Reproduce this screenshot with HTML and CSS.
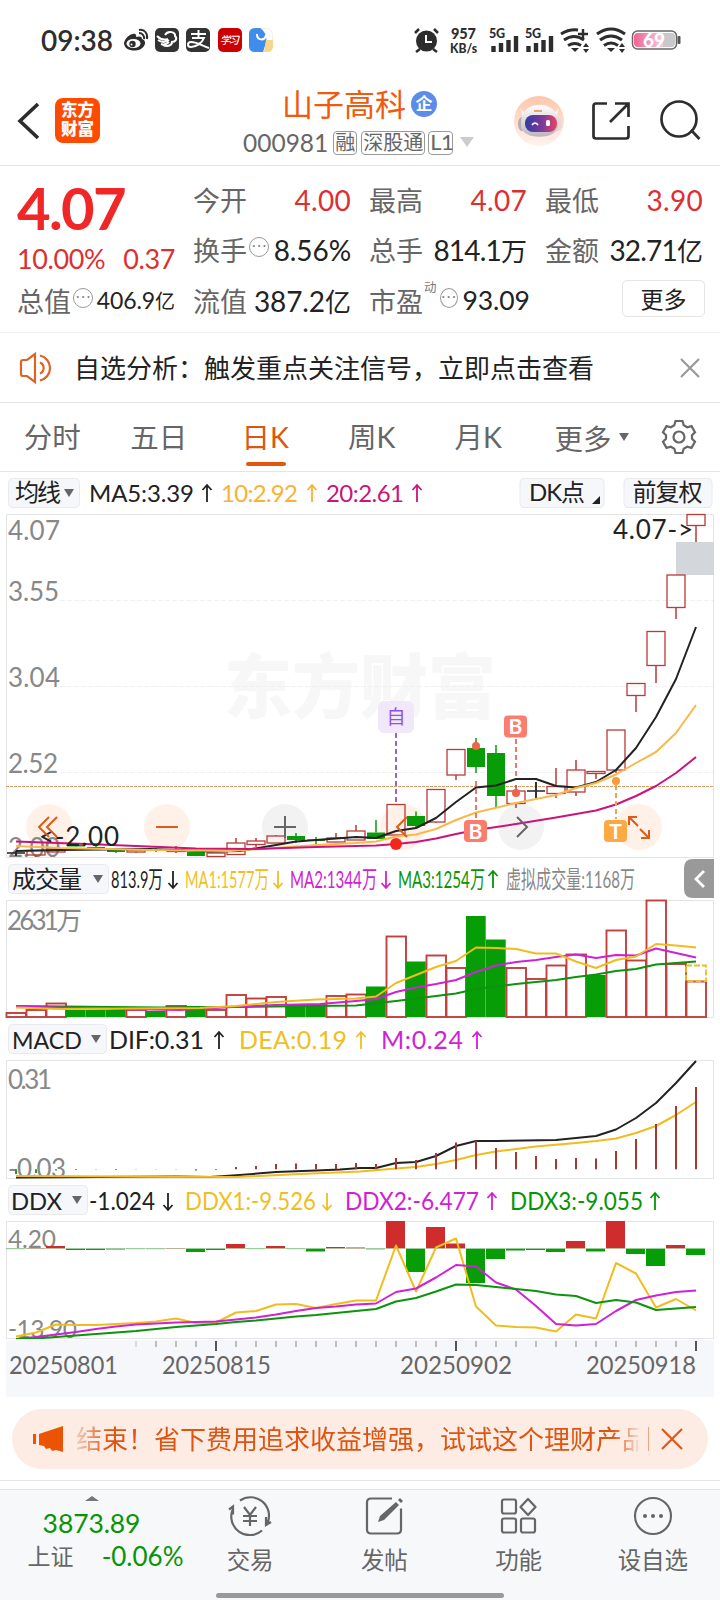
FILE: index.html
```html
<!DOCTYPE html>
<html lang="zh-CN">
<head>
<meta charset="utf-8">
<title>山子高科 000981</title>
<link rel="stylesheet" href="styles.css">
</head>
<body>
<header class="status">
  <span class="clock">09:38</span>
  <svg class="status-left" width="152" height="28" viewBox="122 26 152 28">
    <g fill="none" stroke="#2d2d2d" stroke-width="2"><path d="M139 33a5 5 0 0 1 5 6M139 30c6-1 9 4 8 9"/></g>
    <path fill="#2d2d2d" d="M124 43c1-5 7-10 11-9 2 1 1 3 1 3 3-1 6-1 6 2 3 1 4 4 2 7-4 7-20 6-20-3z"/>
    <ellipse cx="133.500" cy="43.500" rx="7" ry="4.600" fill="#fff"/><circle cx="132.500" cy="44" r="3.200" fill="#2d2d2d"/><circle cx="131.500" cy="44.500" r="1" fill="#fff"/>
    <rect x="155" y="28" width="24" height="24" rx="5" fill="#333"/>
    <path d="M157 36c4 4 8 4 11 3M158 40c4 3 8 2 11 0M161 44c3 1 6 0 8-2M165 35c3-5 11-3 10 1 3 3 0 6-3 6 0 4-6 5-9 3" fill="none" stroke="#fff" stroke-width="2"/>
    <rect x="186" y="28" width="24" height="24" rx="5" fill="#333"/>
    <path d="M191 34h15M198.500 30v8M192 38h12c-2 5-8 9-13 9-4 0-4-5 0-5 6 0 12 4 18 6" fill="none" stroke="#fff" stroke-width="2"/>
    <rect x="218" y="28" width="24" height="24" rx="5" fill="#c00"/>
    <text x="220" y="44" class="study" textLength="19">学习</text>
    <rect x="249.500" y="28.500" width="23" height="23" rx="6" fill="#fff" stroke="#eee"/>
    <path d="M249 34q0-6 6-6h5c6 4 8 11 5 18l-2 6h-8q-6 0-6-6z" fill="#408ceb"/><path d="M266 40h7v6q0 6-6 6h-3z" fill="#f7d58b"/><path d="M257 34c0 7 8 7 9 1" fill="none" stroke="#fff" stroke-width="2"/>
  </svg>
  <svg class="status-right" width="270" height="32" viewBox="412 24 270 32">
    <circle cx="426.500" cy="41" r="10.500" fill="#2d2d2d"/><path d="M426 35v7h6" fill="none" stroke="#fff" stroke-width="2"/><path d="M415 33l4-4M438 33l-4-4M420 49l-4 3M433 49l4 3" stroke="#2d2d2d" stroke-width="2.500"/>
    <g class="net"><text x="451" y="39" font-size="14.500" textLength="25">957</text><text x="450" y="53" font-size="12.500" textLength="27" lengthAdjust="spacingAndGlyphs">KB/s</text>
    <text x="489" y="38" font-size="12.500" textLength="16">5G</text><text x="525" y="38" font-size="12.500" textLength="16">5G</text></g>
    <path d="M493.500 46v6M501 43v9M508.500 40v12M516 36v16M528.500 46v6M536 43v9M543.500 40v12M551 36v16" stroke="#2d2d2d" stroke-width="4.400"/>
    <g fill="none" stroke="#2d2d2d" stroke-width="3"><path d="M561 34q8-5 17-4M564 40q10-7 20 0M568 45.500q7-4 13 0M597 34q14-10 28 0M600 40q11-8 22 0M604 45.500q7-5 14 0"/><path d="M578 34h10M583 29v10" stroke-width="2.400"/></g>
    <path d="M571 48h8l-4 4zM607 48h8l-4 4zM583 47l3-4 3 4zM583 49l3 4 3-4zM619 47l3-4 3 4zM619 49l3 4 3-4z" fill="#2d2d2d"/>
    <defs><linearGradient id="bat"><stop offset="0" stop-color="#ef6292"/><stop offset="1" stop-color="#fac8da"/></linearGradient></defs>
    <rect x="632.500" y="31" width="44" height="18" rx="5" fill="#fff" stroke="#666" stroke-width="1.500"/><path d="M638 33h25v14h-25q-4 0-4-4v-6q0-4 4-4z" fill="url(#bat)"/><path d="M663 33h9q3 0 3 4v6q0 4-3 4h-9z" fill="#c9c9c9"/><rect x="677.500" y="36" width="3" height="8" rx="1" fill="#555"/>
    <text x="643" y="47" class="pct" textLength="22">69</text>
  </svg>
</header>

<div class="titlebar">
  <svg class="back" width="24" height="40" viewBox="0 0 24 40"><path d="M22 3L4 20l18 17" fill="none" stroke="#2d2d2d" stroke-width="3.600"/></svg>
  <div class="logo"><span>东方</span><span>财富</span></div>
  <div class="name">
    <div class="name-row">山子高科<span class="corp">企</span></div>
    <div class="code-row"><span class="code">000981</span><span class="tag">融</span><span class="tag">深股通</span><span class="tag lv">L1</span><i class="drop"></i></div>
  </div>
  <svg class="tools" width="190" height="54" viewBox="512 94 190 54">
    <defs><linearGradient id="halo" x2="0" y2="1"><stop stop-color="#fdc6aa"/><stop offset="1" stop-color="#fff3ed"/></linearGradient><linearGradient id="visor"><stop stop-color="#343a9e"/><stop offset=".55" stop-color="#803a9b"/><stop offset="1" stop-color="#e9445f"/></linearGradient><linearGradient id="shell" x2="0" y2="1"><stop stop-color="#fff"/><stop offset="1" stop-color="#bfb4bd"/></linearGradient></defs>
    <circle cx="539" cy="121" r="25" fill="url(#halo)"/>
    <path d="M520 107q2 5 6 6l-3 6zM559 107q-2 5-6 6l3 6z" fill="#f9f4f2"/><ellipse cx="522" cy="124" rx="4" ry="7" fill="#b5adb5"/><ellipse cx="558" cy="124" rx="4" ry="7" fill="#e5d9da"/>
    <path d="M521 122c0-23 37-23 37 0v5c-2 13-35 13-37 0z" fill="url(#shell)"/><rect x="525" y="115" width="32" height="17" rx="8" fill="url(#visor)"/><path d="M532 125q3-4 6 0" fill="none" stroke="#fff" stroke-width="1.700"/><rect x="546" y="120" width="4" height="6" rx="1.500" fill="#fff"/><path d="M534 111h8" stroke="#eba26d" stroke-width="2"/>
    <path d="M607 103.500h-11q-2.500 0-2.500 2.500v30q0 2.500 2.500 2.500h30q2.500 0 2.500-2.500v-10M610 122l18-18M615 103.500h13.500V117" fill="none" stroke="#2d2d2d" stroke-width="2.700"/>
    <circle cx="679" cy="119" r="17.500" fill="none" stroke="#2d2d2d" stroke-width="2.700"/><path d="M691 130l8.500 9" stroke="#2d2d2d" stroke-width="2.700"/>
  </svg>
</div>

<section class="quote">
  <div class="col first">
    <strong class="price">4.07</strong>
    <div class="cell change"><span>10.00%</span><span>0.37</span></div>
    <div class="cell"><label>总值</label><i class="dots">⋯</i><b class="sm">406.9<em>亿</em></b></div>
  </div>
  <div class="col">
    <div class="cell"><label>今开</label><b class="up">4.00</b></div>
    <div class="cell"><label>换手</label><i class="dots">⋯</i><b>8.56%</b></div>
    <div class="cell"><label>流值</label><b>387.2<em>亿</em></b></div>
  </div>
  <div class="col">
    <div class="cell"><label>最高</label><b class="up">4.07</b></div>
    <div class="cell"><label>总手</label><b class="tight">814.1<em>万</em></b></div>
    <div class="cell"><label>市盈</label><sup>动</sup><i class="dots">⋯</i><b class="pe">93.09</b></div>
  </div>
  <div class="col">
    <div class="cell"><label>最低</label><b class="up">3.90</b></div>
    <div class="cell"><label>金额</label><b class="tight">32.71<em>亿</em></b></div>
    <div class="cell end"><button class="more">更多</button></div>
  </div>
</section>

<section class="notice">
  <svg width="36" height="32" viewBox="19 351 36 32"><path d="M21 361q0-2 2-2h4l8-6v28l-8-6h-4q-2 0-2-2zM40 354.500a12.800 12.800 0 0 1 0 25M40 361.500a6 6 0 0 1 0 11" fill="none" stroke="#dd6424" stroke-width="2.200"/></svg>
  <span class="notice-text">自选分析：触发重点关注信号，立即点击查看</span>
  <svg class="close" width="20" height="20" viewBox="0 0 20 20"><path d="M1 1l18 18M19 1L1 19" stroke="#999" stroke-width="2.200"/></svg>
</section>

<nav class="tabs">
  <span class="tab">分时</span><span class="tab">五日</span><span class="tab on">日K</span><span class="tab">周K</span><span class="tab">月K</span>
  <span class="tab-more">更多<i></i></span>
  <svg width="36" height="36" viewBox="-18 -18 36 36"><path d="M-3.500-16h7l1.200 4.200 3.500 2 4.300-1.100 3.500 6.100-3 3v3.600l3 3-3.500 6.100-4.300-1.100-3.500 2L3.500 16h-7l-1.200-4.200-3.500-2-4.300 1.100-3.500-6.100 3-3v-3.600l-3-3 3.500-6.100 4.300 1.100 3.500-2z" fill="none" stroke="#666" stroke-width="2.200"/><circle r="5.500" fill="none" stroke="#666" stroke-width="2.200"/></svg>
</nav>

<main class="charts">
  <svg id="charts" width="720" height="926" viewBox="0 472 720 926">
    <defs>
      <path id="up" d="M0 0v-17M-4.500-12L0-17l4.500 5" fill="none" stroke-width="1.800"/>
      <path id="down" d="M0 0v-17M-4.500-5L0 0l4.500-5" fill="none" stroke-width="1.800"/>
      <clipPath id="clip"><rect x="6" y="1221" width="708" height="118"/></clipPath>
    </defs>
    <text class="mark" x="224" y="713" textLength="272" lengthAdjust="spacingAndGlyphs">东方财富</text>
    <g class="frame">
      <path d="M6.500 857.500V514.500H713.500V857.500z"/><path d="M6.500 1017.500V900.500H713.500V1017.500z"/><path d="M6.500 1178.500V1060.500H713.500V1178.500z"/><path d="M6.500 1338.500V1221.500H713.500V1338.500z"/>
    </g>
    <path d="M60 600.500H713M60 686.500H713M60 772.500H713" class="grid"/>
    <path d="M6 786.500H713" class="ref"/>
    <rect x="6" y="1340" width="708" height="57" fill="#f6f7fa"/>
    <g class="chip">
      <rect x="8.500" y="478.500" width="71" height="29" rx="4"/><rect x="520" y="478.500" width="84" height="29" rx="4"/><rect x="624" y="478.500" width="88" height="29" rx="4"/>
      <rect x="8.500" y="864.500" width="100" height="29" rx="4"/><rect x="8.500" y="1024.500" width="98" height="29" rx="4"/><rect x="8.500" y="1185.500" width="79" height="29" rx="4"/>
    </g>
    <g fill="#666"><path d="M64 489h10l-5 8zM93 875h10l-5 8zM91 1035h10l-5 8zM72 1196h10l-5 8z"/><path d="M600 496v8h-8z" fill="#222"/></g>
    <g class="t c-k">
      <text x="15" y="501" textLength="46">均线</text><text x="529" y="501" textLength="56">DK点</text><text x="632.500" y="501" textLength="70">前复权</text>
      <text x="89" y="501.500" textLength="105">MA5:3.39</text>
      <text x="12" y="887.500" textLength="70">成交量</text><text x="12" y="1049" textLength="70" lengthAdjust="spacingAndGlyphs">MACD</text><text x="11" y="1210" textLength="51" lengthAdjust="spacingAndGlyphs">DDX</text>
      <text x="111" y="888" textLength="52" lengthAdjust="spacingAndGlyphs">813.9万</text>
      <text class="b" x="109" y="1049" textLength="95">DIF:0.31</text><text class="b" x="89" y="1210" textLength="66" lengthAdjust="spacingAndGlyphs">-1.024</text>
    </g>
    <g class="t c-o"><text x="221" y="501.500" textLength="77">10:2.92</text></g>
    <g class="t c-p"><text x="326" y="501.500" textLength="78">20:2.61</text></g>
    <g class="t c-y"><text x="185" y="888" textLength="84" lengthAdjust="spacingAndGlyphs">MA1:1577万</text><text class="b" x="239" y="1049" textLength="108">DEA:0.19</text><text class="b" x="185" y="1210" textLength="131" lengthAdjust="spacingAndGlyphs">DDX1:-9.526</text></g>
    <g class="t c-m"><text x="290" y="888" textLength="87" lengthAdjust="spacingAndGlyphs">MA2:1344万</text><text class="b" x="381" y="1049" textLength="82">M:0.24</text><text class="b" x="345" y="1210" textLength="134" lengthAdjust="spacingAndGlyphs">DDX2:-6.477</text></g>
    <g class="t c-g"><text x="398" y="888" textLength="87" lengthAdjust="spacingAndGlyphs">MA3:1254万</text><text class="b" x="510" y="1210" textLength="133" lengthAdjust="spacingAndGlyphs">DDX3:-9.055</text></g>
    <g class="t c-l"><text x="506" y="888" textLength="129" lengthAdjust="spacingAndGlyphs">虚拟成交量:1168万</text></g>
    <g stroke="#222"><use href="#up" x="207" y="502"/><use href="#down" x="173" y="888"/><use href="#up" x="219" y="1049"/><use href="#down" x="168" y="1210"/></g>
    <g stroke="#f9b233"><use href="#up" x="312" y="502"/></g><g stroke="#c9157b"><use href="#up" x="417" y="502"/></g>
    <g stroke="#efbf1f"><use href="#down" x="278" y="888"/><use href="#up" x="361" y="1049"/><use href="#down" x="327" y="1210"/></g>
    <g stroke="#cf22d4"><use href="#down" x="386" y="888"/><use href="#up" x="477" y="1049"/><use href="#up" x="492" y="1210"/></g>
    <g stroke="#079407"><use href="#up" x="493" y="888"/><use href="#up" x="655" y="1210"/></g>
    <path d="M714 859h-21q-9 0-9 9v21q0 9 9 9h21z" fill="#999"/><path d="M704 871l-8 8 8 8" fill="none" stroke="#fff" stroke-width="2.800"/>
    <rect x="676" y="542" width="38" height="33" fill="#d3d6db"/>
    <g id="pads"><g fill="#fff0e8"><circle cx="49" cy="827" r="23"/><circle cx="167" cy="827" r="23"/><circle cx="403" cy="827" r="23"/><circle cx="639" cy="827" r="23"/></g><g fill="#f2f2f2"><circle cx="285" cy="827" r="23"/><circle cx="521" cy="827" r="23"/></g></g>
    <g class="axis">
      <text x="8" y="540" textLength="52">4.07</text><text x="8" y="601" textLength="51">3.55</text><text x="8" y="687" textLength="52">3.04</text><text x="8" y="773" textLength="50">2.52</text><text x="8" y="857" textLength="52">2.00</text>
      <text x="7" y="930" textLength="75">2631万</text><text x="8" y="1088.500" textLength="44">0.31</text><text x="8" y="1178" textLength="58">-0.03</text>
      <text class="ddx" x="8" y="1248" textLength="48">4.20</text><text class="ddx" x="8" y="1338" textLength="69">-13.90</text>
    </g>
    <g id="plot"></g>
    <g class="axis dates"><text x="9" y="1374" textLength="109" lengthAdjust="spacingAndGlyphs">20250801</text><text x="162" y="1374" textLength="109" lengthAdjust="spacingAndGlyphs">20250815</text><text x="400" y="1374" textLength="112" lengthAdjust="spacingAndGlyphs">20250902</text><text x="586" y="1374" textLength="110" lengthAdjust="spacingAndGlyphs">20250918</text></g>
    <g class="callout"><text x="613" y="539" textLength="80">4.07-&gt;</text><text x="39" y="846" textLength="80">&lt;-2.00</text></g>
    <g fill="none" stroke="#df5b17" stroke-width="2"><path d="M49 817L39 827l10 10M57 817L47 827l10 10M156 827h22M407 817l-10 10 10 10M629 825v-8h8M629 817l9 9M649 830v8h-8M649 838l-9-9"/><path stroke="#666" d="M274 827h22M285 816v22M517 817l10 10-10 10"/></g>
    <g fill="none" stroke-width="2" stroke-dasharray="5 3"><path d="M396 733V804" stroke="#9a62d8"/><path d="M516 739V777M476 781V819" stroke="#f0766a"/><path d="M616 785V819" stroke="#f4a14a"/></g>
    <circle cx="396" cy="844" r="6" fill="#f3261f"/><g fill="#f0624a"><circle cx="476" cy="746" r="4"/><circle cx="516" cy="793" r="4"/></g><circle cx="616" cy="781" r="4" fill="#f89b3b"/>
    <rect x="378" y="701" width="36" height="32" rx="6" fill="#efe4fc" opacity=".85"/><text x="386.500" y="724" class="zi">自</text>
    <g fill="#fb7d6e"><rect x="504" y="715.500" width="23" height="22" rx="4"/><rect x="464" y="820" width="23" height="22" rx="4"/><rect x="604" y="820" width="23" height="22" rx="4" fill="#fca944"/></g>
    <g class="bt"><text x="515.500" y="734">B</text><text x="475.500" y="838.500">B</text><text x="615.500" y="838.500">T</text></g>
  </svg>
</main>

<aside class="promo">
  <svg width="34" height="28" viewBox="30 1425 34 28"><path d="M32 1434h3v10h-3zM38 1434l24-8v26l-7-2-4 1-2-3-4 1-2-3-5-1z" fill="#ea5404"/></svg>
  <span class="promo-text">结束！省下费用追求收益增强，试试这个理财产品</span>
  <i class="bar"></i>
  <svg width="22" height="22" viewBox="0 0 22 22"><path d="M1 1l20 20M21 1L1 21" stroke="#e2571a" stroke-width="2.200"/></svg>
</aside>

<footer class="dock">
  <div class="index"><i class="tri"></i><span class="pts">3873.89</span><span class="idx-row"><span>上证</span><span class="down">-0.06%</span></span></div>
  <div class="item"><svg width="44" height="40" viewBox="-22 -20 44 40"><g fill="none" stroke="#666" stroke-width="2.200"><path d="M-10-15.500A18.500 18.500 0 0 1 17.500 7M12 14.500A18.500 18.500 0 0 1-17.500-6M-21-6.500l4-3v8M21 6l-5 3V1M-6-9L0-1l6-8M0-1V10M-7 0H7M-7 5H7"/></g></svg><span>交易</span></div>
  <div class="item"><svg width="44" height="40" viewBox="-22 -20 44 40"><path d="M8-17.500h-21q-4 0-4 4v27q0 4 4 4h26q4 0 4-4v-21" fill="none" stroke="#666" stroke-width="2.200"/><path d="M-6 6l2-6L12-14l3 3L0 4zM14-16l2-2 3 3-2 2z" fill="#666"/></svg><span>发帖</span></div>
  <div class="item"><svg width="44" height="40" viewBox="-22 -20 44 40"><g fill="none" stroke="#666" stroke-width="2.200"><rect x="-17" y="-16.500" width="14" height="14" rx="2"/><rect x="-17" y="2.500" width="14" height="14" rx="2"/><rect x="2" y="2.500" width="14" height="14" rx="2"/><path d="M9-17l7.500 8L9-1 1.500-9z" stroke-linejoin="round"/></g></svg><span>功能</span></div>
  <div class="item"><svg width="44" height="40" viewBox="-22 -20 44 40"><circle r="18" fill="none" stroke="#666" stroke-width="2.200"/><g fill="#666"><circle cx="-8" r="2"/><circle r="2"/><circle cx="8" r="2"/></g></svg><span>设自选</span></div>
  <i class="home"></i>
</footer>
<script src="chart.js"></script>
</body>
</html>
```
FILE: styles.css
```css
* { box-sizing: border-box; }
body { margin: 0; width: 720px; height: 1600px; overflow: hidden; background: #fff; color: #222; font-family: Lato, "Noto Sans CJK SC", sans-serif; display: flex; flex-direction: column; }
i, em { font-style: normal; }
svg { display: block; flex: none; }
.status { height: 80px; padding: 0 38px 0 41px; display: flex; align-items: center; }
.clock { font-size: 28px; font-weight: 600; color: #2d2d2d; width: 81px; letter-spacing: 0; white-space: nowrap; }
.status-right { margin-left: auto; }
.net { font-weight: 900; fill: #2d2d2d; }
.study { font-size: 10.500px; font-weight: 500; font-style: italic; fill: #fff; }
.pct { font-size: 19px; font-weight: 900; fill: #fff; }
.titlebar { height: 86px; border-bottom: 1px solid #e4e4e4; display: flex; align-items: flex-start; padding: 7px 18px 0 16px; }
.back { margin-top: 14px; }
.logo { margin: 11px 0 0 15px; width: 45px; height: 45px; border-radius: 8px; background: #ff4b00; color: #fff; font-size: 16.500px; font-weight: 900; line-height: 19px; padding-top: 3px; display: flex; flex-direction: column; align-items: center; }
.name { margin: 0 0 0 143px; width: 240px; flex: none; display: flex; flex-direction: column; align-items: flex-start; }
.name-row { height: 36px; line-height: 36px; font-size: 31px; color: #f05a0d; display: flex; align-items: center; gap: 5px; margin: -1px 0 0 39px; white-space: nowrap; }
.corp { width: 26px; height: 26px; border-radius: 50%; background: #5c8bea; color: #fff; font-size: 17px; font-weight: 700; line-height: 25px; text-align: center; }
.code-row { height: 42px; display: flex; align-items: center; gap: 4px; color: #666; font-size: 24.500px; white-space: nowrap; }
.code { margin-right: 1px; line-height: 40px; }
.tag { height: 24px; border: 1px solid #999; border-radius: 4px; font-size: 20px; line-height: 20px; padding: 0 1px; }
.lv { font-size: 22px; width: 25px; letter-spacing: -.5px; margin-left: -1px; }
.drop { border: 7px solid transparent; border-top: 10px solid #ccc; border-bottom: 0; margin: -2px 0 0 3px; }
.tools { margin: 7px 0 0 auto; }
.quote { height: 167px; padding: 8px 17px 0; display: grid; grid-template-columns: repeat(4, 158px); gap: 18px; border-bottom: 1px solid #efefef; }
.col { display: flex; flex-direction: column; }
.cell { height: 50.500px; display: flex; align-items: center; font-size: 27px; white-space: nowrap; }
.cell label { color: #666; }
.cell b { margin-left: auto; font-weight: 400; font-size: 28px; letter-spacing: -.1px; }
.cell b.tight { letter-spacing: -.8px; }
.cell em { font-size: 26px; letter-spacing: 0; }
.cell b.sm { font-size: 23px; }
.cell b.sm em { font-size: 20px; }
.cell b.pe { font-size: 26.500px; margin-left: 5px; margin-right: auto; }
.cell b.up { color: #dc3030; letter-spacing: .3px; position: relative; top: 1px; }
.cell sup { font-size: 12.500px; color: #777; align-self: flex-start; line-height: 20px; margin: 3px 1px 0 1px; }
.dots { width: 20px; height: 20px; border: 1.500px solid #999; border-radius: 50%; margin: -5px 0 0 2px; font-size: 16px; line-height: 16px; color: #888; text-align: center; font-family: "DejaVu Sans", sans-serif; }
.price { font-size: 58px; line-height: 68px; height: 59px; font-weight: 700; color: #f02727; letter-spacing: -1.700px; }
.change { height: 42px; padding-top: 8px; justify-content: space-between; color: #dc3030; letter-spacing: -.4px; }
.end { justify-content: flex-end; }
.more { width: 83px; height: 37px; border: 1px solid #e4e4e4; border-radius: 5px; background: #fff; padding: 0; font: 23px/33px "Noto Sans CJK SC", sans-serif; color: #222; margin: -4px -2px 0 0; }
.notice { height: 70px; border-bottom: 1px solid #e4e4e4; display: flex; align-items: center; padding: 0 20px 0 19px; }
.notice-text { font-size: 26px; margin: -3px 0 0 19px; white-space: nowrap; }
.close { margin-left: auto; }
.tabs { height: 69px; border-bottom: 1px solid #e4e4e4; display: flex; align-items: center; color: #666; font-size: 28.500px; }
.tab { width: 106.500px; height: 68px; line-height: 69px; text-align: center; position: relative; left: -1px; }
.tab.on { color: #dc560d; }
.tab.on::after { content: ""; position: absolute; left: 34px; bottom: 5px; width: 40px; height: 4px; border-radius: 2px; background: #e1570c; }
.tab-more { width: 106px; margin-left: 22px; display: flex; align-items: center; gap: 7px; white-space: nowrap; }
.tab-more i { border: 5px solid transparent; border-top: 8px solid #666; border-bottom: 0; }
.charts { height: 926px; }
.mark { font-size: 70px; font-weight: 900; fill: #f7f7f8; }
.frame { fill: none; stroke: #e4e4e4; }
.grid { stroke: #f0f0f0; stroke-dasharray: 5 2; }
.ref { stroke: #d9a06c; stroke-dasharray: 3 1; }
.chip { fill: #f6f7fa; stroke: #e9eaee; }
.t { font-size: 24px; }
.t .b { font-size: 25px; }
.c-k { fill: #222; } .c-o { fill: #f9b233; } .c-p { fill: #c9157b; } .c-y { fill: #efbf1f; } .c-m { fill: #cf22d4; } .c-g { fill: #079407; } .c-l { fill: #888; }
.axis { font-size: 26px; fill: #888; }
.axis .ddx { font-size: 24.500px; }
.dates { font-size: 25px; fill: #666; }
.callout { font-size: 26px; fill: #222; }
.zi { font-size: 19px; fill: #9650e0; }
.bt { font-size: 21px; font-weight: 700; fill: #fff; text-anchor: middle; }
.promo { margin: 11px 12px 0; height: 60px; flex: none; border-radius: 30px; background: #fdece3; display: flex; align-items: center; padding: 0 25px 0 19px; }
.promo-text { width: 564px; margin: -3px 0 0 11px; overflow: hidden; white-space: nowrap; font-size: 26px; color: #dc5512; -webkit-mask-image: linear-gradient(90deg, rgba(0,0,0,.2), #000 32px, #000 536px, rgba(0,0,0,.15)); mask-image: linear-gradient(90deg, rgba(0,0,0,.2), #000 32px, #000 536px, rgba(0,0,0,.15)); }
.bar { width: 1px; height: 24px; background: #e9a684; margin: 0 12px 0 10px; }
.dock { margin-top: 11px; height: 120px; flex: none; border-top: 1px solid #e4e4e4; padding-top: 9px; display: flex; position: relative; color: #666; background: linear-gradient(#fff 8px, #e4e4e4 8px, #e4e4e4 9px, #f7f8fa 9px); }
.index { width: 183px; display: flex; flex-direction: column; align-items: center; }
.tri { border: 7px solid transparent; border-bottom: 5px solid #777; border-top: 0; margin-top: 6px; }
.pts { font-size: 26.500px; line-height: 32px; margin-top: 6px; color: #079407; letter-spacing: -.1px; }
.idx-row { width: 156px; margin-left: 28px; display: flex; justify-content: space-between; align-items: center; font-size: 23px; line-height: 34px; }
.down { font-size: 26px; color: #079407; letter-spacing: 0; }
.item { width: 134.500px; display: flex; flex-direction: column; align-items: center; font-size: 23.500px; line-height: 34px; padding-top: 6px; }
.item span { margin-top: 7px; }
.home { position: absolute; left: 216px; bottom: 2px; width: 288px; height: 5px; border-radius: 3px; background: #999; }
```
FILE: chart.js
```js
const plot = document.getElementById("plot");
const RED = "#b93a38", GREEN = "#069d06";
const cx = (i) => 16 + 20 * i;

function add(tag, attrs, parent = plot) {
  const el = document.createElementNS("http://www.w3.org/2000/svg", tag);
  for (const key in attrs) el.setAttribute(key, attrs[key]);
  parent.appendChild(el);
  return el;
}
function line(points, color, parent) {
  add("polyline", { points: points.map((p) => p.join(",")).join(" "), fill: "none", stroke: color, "stroke-width": 2, "stroke-linejoin": "round" }, parent);
}

// [kind, bodyTop, bodyBottom, wickTop, wickBottom]
const candles = [
  ["k",853,853,851,856],["r",850.5,855,850,857],["r",849,852,849,852],["g",845,846.5,844,847],["g",847,848.5,846,849],
  ["g",850,852,849,853],["r",850,852,849,853],["g",849,851,848,852],["r",850,851.5,846,853],["g",852,856,851,856],
  ["r",853,856.5,853,856.5],["r",843,854.5,838,855],["r",841,844.5,838,847],["r",836,843,835,843],["g",836,840,833,843],
  ["g",839.5,841,837,845],["r",838,842,833,842],["r",831,840,825,840],["g",832.5,839,820,839],["r",804.5,835,804,835],
  ["g",816,826,811.5,828],["r",789.5,822,789,823],["r",749.5,775,749,780],["g",748,767,738,773],["g",753,796,745,807],
  ["r",791,803.5,785,808],["k",791,791.5,782,798],["r",786.5,793.5,768,798],["r",770,792,760,796],["r",771.5,773.5,771,779],
  ["r",730,770,730,773],["r",683.5,695.5,683,712],["r",631.5,665.5,631,683],["r",575,607.5,575,619],["r",514.5,525.5,514,542]
];
candles.forEach(([kind, top, bottom, high, low], i) => {
  const x = cx(i), color = kind === "r" ? RED : kind === "g" ? GREEN : "#222";
  add("path", { d: `M${x} ${high}V${top}M${x} ${bottom}V${low}`, stroke: color, "stroke-width": 1.5 });
  if (kind === "k") add("path", { d: `M${x} ${high}V${low}M${x - 9} ${top}h18`, stroke: color, "stroke-width": 1.3 });
  else add("rect", { x: x - 9, y: top, width: 18, height: bottom - top, fill: kind === "g" ? GREEN : "none", stroke: color, "stroke-width": kind === "g" ? 0 : 1.3 });
});
line([[16,851],[60,850],[150,849],[210,851.5],[240,851],[276,845],[296,841.5],[316,840],[336,838.5],[356,837],[376,838],[396,831],[416,828],[436,818],[456,802],[476,787.5],[496,785.5],[516,779],[536,779],[556,786],[576,787.5],[596,782],[616,770],[636,748],[656,717],[676,679],[696,627]], "#222");
line([[16,846],[60,848],[150,850],[230,851],[276,848],[316,845],[356,843],[376,841.5],[396,836.5],[416,834.5],[436,829],[456,820],[476,812.5],[516,803],[556,795],[576,788],[596,783],[616,774.5],[636,763],[656,752],[676,733],[696,705]], "#f9b94a");
line([[16,841.5],[100,844.5],[196,848.5],[250,849],[316,847],[376,845.5],[396,844],[416,842],[436,838.5],[456,834],[476,830],[516,824],[556,817.5],[596,810.5],[616,804.5],[636,796],[656,786],[676,773],[696,757]], "#c9157b");

// volume columns: colour code and top edge
const volume = [
  "r1013","r1010","r1003.5","g1010","g1010","g1010","r1010","g1011","r1006","g1006","r1010","r995","r998.5","r997","g1005","g1004","r996","r994.5","g986.5",
  "r936.5","g961.5","r955.5","r968","g916","g939.5","r968","r979","r965.5","r954.5","g975","r930.5","r960.5","r900.5","r964","r981.5"
];
volume.forEach((v, i) => {
  const y = +v.slice(1), green = v[0] === "g";
  add("rect", { x: 6 + 20 * i + (green ? 0 : .5), y, width: green ? 19.7 : 19.5, height: 1017 - y, fill: green ? GREEN : "#fff", stroke: green ? "none" : "#c0403d", "stroke-width": 1.9 });
});
add("rect", { x: 686, y: 965.5, width: 20, height: 15.5, fill: "none", stroke: "#edbd25", "stroke-width": 1.8, "stroke-dasharray": "6 2" });
line([[16,1006],[160,1007.5],[240,1007],[316,1006],[356,1005.5],[396,1001],[436,996],[456,993.5],[476,989],[516,984],[556,980],[576,977],[596,974.5],[616,971],[636,969],[656,964.5],[676,963],[696,961.5]], "#0d930d");
line([[16,1006.5],[120,1009],[180,1010],[240,1006.5],[276,1005],[320,1004],[356,1001],[376,999],[396,992],[416,987.5],[436,984],[456,980],[476,972],[496,965.5],[516,962],[536,960],[556,957],[576,954.5],[596,958],[616,955],[636,955.5],[656,948.5],[676,953],[696,957.5]], "#cf22d4");
line([[16,1007.5],[60,1009],[200,1008],[236,1006],[276,1002],[316,999.5],[356,998.5],[376,996.5],[396,983],[416,975],[436,967],[456,961],[476,947.5],[496,948],[516,949],[536,953.5],[556,953.5],[576,961.5],[596,968],[616,960],[636,956.5],[656,944],[676,945.5],[696,947.5]], "#f0bc1e");

// MACD
line([[16,1177.5],[100,1177],[176,1176.5],[210,1177],[240,1175],[276,1172],[316,1170.5],[340,1169.5],[360,1168],[376,1168],[396,1163],[416,1162],[436,1156],[456,1146],[476,1141],[496,1141],[556,1140],[596,1136],[616,1129.5],[636,1118],[656,1103],[676,1083],[696,1061]], "#222");
line([[16,1176],[236,1177],[300,1174],[360,1171.5],[396,1168.5],[416,1167],[436,1164],[456,1160],[476,1155],[496,1151.5],[536,1146.5],[576,1143],[596,1141],[616,1138.5],[636,1133],[656,1126],[676,1115],[696,1102]], "#f0bc1e");
const macd = [1174,1173,1170.5,1170,1169.5,1170,1169.5,1169.5,1169.5,1170.5,1170,1167,1166,1164,1163.5,1164,1164,1163,1164,1158,1160,1153,1142.5,1140.5,1148,1152,1156,1159,1158,1158.5,1151,1139,1124,1106,1087];
macd.forEach((y, i) => add("path", { d: `M${cx(i)} 1169.300V${y}`, stroke: y > 1169.3 ? "#239b23" : "#a63834", "stroke-width": 2 }));

// DDX
const ddx = [1249,1248,1246,1250,1250,1249.5,1249,1249,1248,1252,1250,1244,1249,1246,1249,1251.5,1247,1247.5,1249.3,1221,1272,1227,1243.5,1283,1259,1250.5,1250,1252,1241,1251.5,1221,1254,1266,1245,1255];
ddx.forEach((y, i) => add("rect", { x: cx(i) - 10, y: Math.min(y, 1248.5), width: 19, height: Math.max(.6, Math.abs(y - 1248.5)), fill: y > 1248.5 ? GREEN : "#cf2d2d" }));
add("path", { d: "M6 1248.500H686", stroke: "#a8cba8", "stroke-width": .6 });
const g = add("g", { "clip-path": "url(#clip)" });
const series = (ys) => ys.map((y, i) => [cx(i), y]);
line(series([1336.5,1332.5,1324.5,1325,1325,1324,1323,1321.5,1318.5,1323,1322.5,1312.5,1311,1304.5,1304,1308,1304,1300.5,1300.5,1245.5,1291.5,1247.5,1238.5,1306.5,1325.5,1327,1327.5,1331.5,1314.5,1318.5,1263,1273.5,1307.5,1299,1310.5]), "#f0bc1e", g);
line(series([1339,1337,1334.5,1332,1329,1326.5,1324.5,1323.5,1322.5,1322,1321.5,1319.5,1317.5,1314.5,1311,1308,1306.5,1304.5,1303.5,1292,1288.5,1277.5,1265,1266.5,1282.5,1289.5,1306,1324,1325.5,1324,1311,1300,1295.5,1292,1290.5]), "#cf22d4", g);
line(series([1339,1338.5,1337,1335.5,1334,1332.5,1331,1329,1327,1325.5,1324,1322,1320.5,1318.5,1316.5,1315,1313,1311,1309,1301.5,1298,1291.5,1284.5,1285,1287,1289,1291,1294.5,1296,1303,1300,1302.5,1310,1308.5,1307]), "#0d930d", g);

for (let i = 6; i < 35; i++) {
  const major = i === 10 || i === 22 || i === 34;
  add("path", { d: `M${cx(i)} 1341v${major ? 10 : 6}`, stroke: major ? "#555" : "#aaa", "stroke-width": major ? 2 : 1.5, opacity: i === 6 ? .5 : 1 });
}
```
